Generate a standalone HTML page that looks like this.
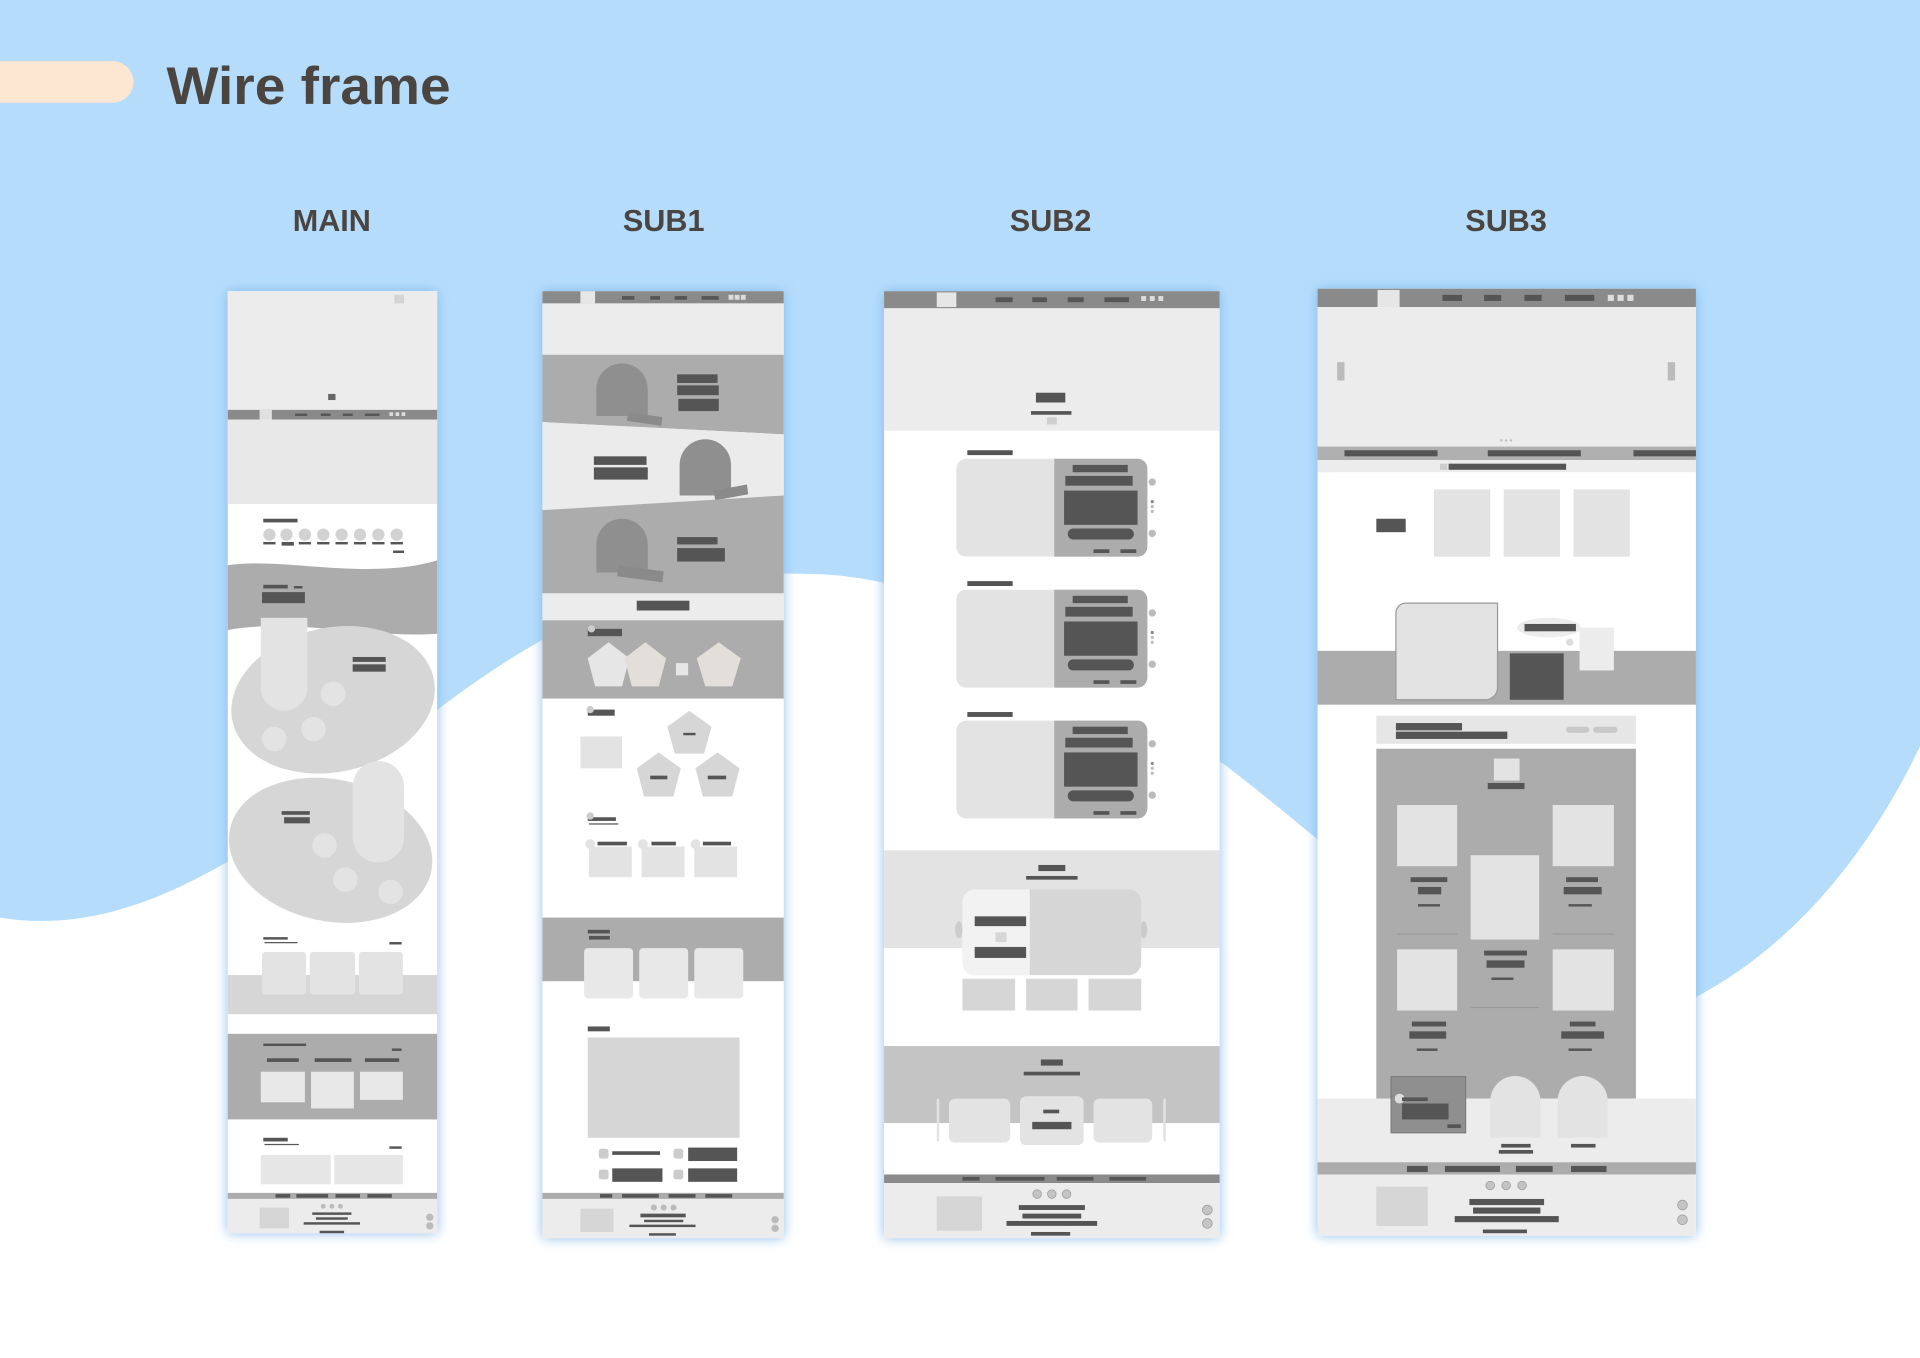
<!DOCTYPE html>
<html><head><meta charset="utf-8">
<style>
html,body{margin:0;padding:0;width:1920px;height:1358px;overflow:hidden;background:#fff}
svg{display:block}
</style></head>
<body>
<svg width="1920" height="1358" viewBox="0 0 1568 1110" xmlns="http://www.w3.org/2000/svg" preserveAspectRatio="none">
<defs>
<filter id="gl" x="-20%" y="-5%" width="140%" height="110%">
<feDropShadow dx="0" dy="0" stdDeviation="5" flood-color="#7fb6ea" flood-opacity="0.9"/>
</filter>
</defs>
<!-- background -->
<rect x="0" y="0" width="1568" height="1110" fill="#b5dcfb"/>
<path d="M0,750 C120,770 230,680 360,578 C470,495 560,462 680,470 C800,480 900,560 1000,625 C1150,740 1250,860 1385,815 C1470,770 1530,690 1568,610 L1568,1110 L0,1110 Z" fill="#ffffff"/>
<!-- title -->
<path d="M0,50 L92,50 A17,17 0 0 1 92,84 L0,84 Z" fill="#fde6d2"/>
<text x="136" y="85" font-family="Liberation Sans, sans-serif" font-weight="bold" font-size="43" fill="#4a4540" textLength="232" lengthAdjust="spacingAndGlyphs">Wire frame</text>
<g font-family="Liberation Sans, sans-serif" font-weight="bold" font-size="25" fill="#4a4540" text-anchor="middle">
<text x="271" y="189">MAIN</text>
<text x="542" y="189">SUB1</text>
<text x="858" y="189">SUB2</text>
<text x="1230" y="189">SUB3</text>
</g>

<!-- panels glow -->
<g filter="url(#gl)">
<rect x="186" y="238" width="171" height="770" fill="#fff"/>
<rect x="443" y="238" width="197" height="774" fill="#fff"/>
<rect x="722" y="238" width="274" height="774" fill="#fff"/>
<rect x="1076" y="236" width="309" height="774" fill="#fff"/>
</g>

<!-- ===== MAIN ===== -->
<g>
<rect x="186" y="238" width="171" height="97" fill="#ececec"/>
<rect x="322" y="241" width="8" height="7" fill="#d4d4d4"/>
<rect x="268" y="322" width="6" height="5" fill="#666"/>
<rect x="186" y="335" width="171" height="8" fill="#8a8a8a"/>
<rect x="212" y="335" width="10" height="8" fill="#e0e0e0"/>
<g fill="#555"><rect x="241" y="338" width="10" height="2"/><rect x="262" y="338" width="8" height="2"/><rect x="280" y="338" width="8" height="2"/><rect x="298" y="338" width="12" height="2"/></g>
<g fill="#ddd"><rect x="318" y="337" width="3" height="3"/><rect x="323" y="337" width="3" height="3"/><rect x="328" y="337" width="3" height="3"/></g>
<rect x="186" y="343" width="171" height="69" fill="#e8e8e8"/>
<rect x="215" y="424" width="28" height="3" fill="#555"/>
<g fill="#d2d2d2"><circle cx="220" cy="437" r="5"/><circle cx="234" cy="437" r="5"/><circle cx="249" cy="437" r="5"/><circle cx="264" cy="437" r="5"/><circle cx="279" cy="437" r="5"/><circle cx="294" cy="437" r="5"/><circle cx="309" cy="437" r="5"/><circle cx="324" cy="437" r="5"/></g>
<g fill="#555"><rect x="215" y="443" width="10" height="2"/><rect x="230" y="443" width="10" height="3"/><rect x="244" y="443" width="10" height="2"/><rect x="259" y="443" width="10" height="2"/><rect x="274" y="443" width="10" height="2"/><rect x="289" y="443" width="10" height="2"/><rect x="304" y="443" width="10" height="2"/><rect x="319" y="443" width="10" height="2"/><rect x="321" y="450" width="9" height="2"/></g>
<path d="M186,462 C230,455 300,475 357,458 L357,518 C300,522 240,505 186,515 Z" fill="#acacac"/>
<rect x="215" y="478" width="20" height="3" fill="#555"/><rect x="240" y="479" width="7" height="2" fill="#555"/>
<rect x="214" y="484" width="35" height="9" fill="#555"/>
<ellipse cx="272" cy="572" rx="84" ry="59" transform="rotate(-12 272 572)" fill="#d6d6d6"/>
<rect x="213" y="505" width="38" height="76" rx="19" fill="#e3e3e3"/>
<rect x="213" y="505" width="38" height="30" fill="#e3e3e3"/>
<circle cx="272" cy="567" r="10" fill="#e3e3e3"/><circle cx="256" cy="596" r="10" fill="#e3e3e3"/><circle cx="224" cy="604" r="10" fill="#e3e3e3"/>
<rect x="288" y="537" width="27" height="4" fill="#555"/><rect x="288" y="543" width="27" height="6" fill="#555"/>
<ellipse cx="270" cy="695" rx="84" ry="58" transform="rotate(12 270 695)" fill="#d6d6d6"/>
<rect x="288" y="622" width="42" height="83" rx="21" fill="#e3e3e3"/>
<circle cx="265" cy="691" r="10" fill="#e3e3e3"/><circle cx="282" cy="719" r="10" fill="#e3e3e3"/><circle cx="319" cy="729" r="10" fill="#e3e3e3"/>
<rect x="230" y="663" width="23" height="3" fill="#555"/><rect x="232" y="668" width="21" height="5" fill="#555"/>
<rect x="215" y="766" width="20" height="2" fill="#555"/><rect x="216" y="770" width="27" height="1" fill="#555"/><rect x="318" y="770" width="10" height="2" fill="#555"/>
<rect x="186" y="797" width="171" height="32" fill="#d6d6d6"/>
<g fill="#e3e3e3"><rect x="214" y="778" width="36" height="35" rx="3"/><rect x="253" y="778" width="37" height="35" rx="3"/><rect x="293" y="778" width="36" height="35" rx="3"/></g>
<rect x="186" y="845" width="171" height="70" fill="#acacac"/>
<rect x="215" y="853" width="35" height="2" fill="#555"/><rect x="320" y="857" width="8" height="2" fill="#555"/>
<g fill="#555"><rect x="218" y="865" width="26" height="3"/><rect x="257" y="865" width="30" height="3"/><rect x="298" y="865" width="28" height="3"/></g>
<g fill="#e8e8e8"><rect x="213" y="876" width="36" height="25"/><rect x="254" y="876" width="35" height="30"/><rect x="294" y="876" width="35" height="23"/></g>
<rect x="215" y="930" width="20" height="3" fill="#555"/><rect x="216" y="935" width="28" height="1" fill="#555"/><rect x="318" y="937" width="10" height="2" fill="#555"/>
<g fill="#e6e6e6"><rect x="213" y="944" width="57" height="24"/><rect x="273" y="944" width="56" height="24"/></g>
<rect x="186" y="975" width="171" height="5" fill="#acacac"/>
<g fill="#555"><rect x="225" y="976" width="12" height="3"/><rect x="242" y="976" width="26" height="3"/><rect x="274" y="976" width="20" height="3"/><rect x="300" y="976" width="20" height="3"/></g>
<rect x="186" y="980" width="171" height="28" fill="#ececec"/>
<rect x="212" y="987" width="24" height="17" fill="#d6d6d6"/>
<g fill="#bbb"><circle cx="264" cy="986" r="2"/><circle cx="271" cy="986" r="2"/><circle cx="278" cy="986" r="2"/><circle cx="351" cy="995" r="3"/><circle cx="351" cy="1002" r="3"/></g>
<g fill="#555"><rect x="255" y="991" width="32" height="2"/><rect x="258" y="995" width="26" height="2"/><rect x="248" y="999" width="46" height="2"/><rect x="261" y="1006" width="20" height="2"/></g>
</g>

<!-- ===== SUB1 ===== -->
<g>
<rect x="443" y="238" width="197" height="10" fill="#8a8a8a"/>
<rect x="474" y="238" width="12" height="10" fill="#e6e6e6"/>
<g fill="#555"><rect x="508" y="242" width="10" height="3"/><rect x="531" y="242" width="8" height="3"/><rect x="551" y="242" width="10" height="3"/><rect x="573" y="242" width="14" height="3"/></g>
<g fill="#ddd"><rect x="595" y="241" width="4" height="4"/><rect x="600" y="241" width="4" height="4"/><rect x="605" y="241" width="4" height="4"/></g>
<rect x="443" y="248" width="197" height="42" fill="#ececec"/>
<path d="M443,290 L640,290 L640,355 L443,345 Z" fill="#acacac"/>
<path d="M487,340 L487,318 A21,21 0 0 1 529,318 L529,340 Z" fill="#8f8f8f"/>
<path d="M513,337 L541,341 L540,348 L512,344 Z" fill="#8a8a8a"/>
<g fill="#555"><rect x="553" y="306" width="33" height="7"/><rect x="553" y="315" width="34" height="8"/><rect x="554" y="326" width="33" height="10"/></g>
<path d="M443,345 L640,355 L640,405 L443,417 Z" fill="#ebebeb"/>
<path d="M555,405 L555,380 A21,21 0 0 1 597,380 L597,405 Z" fill="#8f8f8f"/>
<path d="M583,401 L610,396 L611,404 L584,409 Z" fill="#8a8a8a"/>
<g fill="#555"><rect x="485" y="373" width="43" height="7"/><rect x="485" y="382" width="44" height="10"/></g>
<path d="M443,417 L640,405 L640,485 L443,485 Z" fill="#acacac"/>
<path d="M487,468 L487,445 A21,21 0 0 1 529,445 L529,468 Z" fill="#8f8f8f"/>
<path d="M505,462 L542,467 L541,476 L504,471 Z" fill="#8a8a8a"/>
<g fill="#555"><rect x="553" y="439" width="33" height="6"/><rect x="553" y="448" width="39" height="11"/></g>
<rect x="443" y="485" width="197" height="22" fill="#ececec"/>
<rect x="520" y="491" width="43" height="8" fill="#555"/>
<rect x="443" y="507" width="197" height="64" fill="#acacac"/>
<rect x="480" y="514" width="28" height="6" fill="#555"/><circle cx="483" cy="514" r="3" fill="#ccc"/>
<polygon points="497,525 514,538 508,561 486,561 480,538" fill="#e6e6e6"/>
<polygon points="527,525 544,538 538,561 516,561 510,538" fill="#e2dfdb"/>
<rect x="552" y="542" width="10" height="10" fill="#e6e6e6"/>
<polygon points="587,525 605,538 598,561 576,561 569,538" fill="#e2dfdb"/>
<rect x="480" y="580" width="22" height="5" fill="#555"/><circle cx="482" cy="580" r="3" fill="#ccc"/>
<polygon points="563,581 581,594 575,616 551,616 545,594" fill="#d6d6d6"/>
<rect x="558" y="599" width="10" height="2" fill="#555"/>
<rect x="474" y="602" width="34" height="26" fill="#e3e3e3"/>
<polygon points="538,615 556,628 550,651 526,651 520,628" fill="#d6d6d6"/>
<polygon points="586,615 604,628 598,651 574,651 568,628" fill="#d6d6d6"/>
<rect x="531" y="634" width="14" height="3" fill="#555"/><rect x="578" y="634" width="15" height="3" fill="#555"/>
<rect x="480" y="668" width="23" height="3" fill="#555"/><rect x="481" y="673" width="24" height="1" fill="#555"/><circle cx="482" cy="667" r="3" fill="#ccc"/>
<g fill="#e3e3e3"><rect x="481" y="692" width="35" height="25"/><rect x="524" y="692" width="35" height="25"/><rect x="567" y="692" width="35" height="25"/><circle cx="482" cy="690" r="4"/><circle cx="525" cy="690" r="4"/><circle cx="568" cy="690" r="4"/></g>
<g fill="#555"><rect x="488" y="688" width="24" height="3"/><rect x="532" y="688" width="20" height="3"/><rect x="574" y="688" width="23" height="3"/></g>
<rect x="443" y="750" width="197" height="52" fill="#acacac"/>
<rect x="480" y="760" width="18" height="3" fill="#555"/><rect x="481" y="765" width="17" height="3" fill="#555"/>
<g fill="#e8e8e8"><rect x="477" y="775" width="40" height="41" rx="3"/><rect x="522" y="775" width="40" height="41" rx="3"/><rect x="567" y="775" width="40" height="41" rx="3"/></g>
<rect x="480" y="839" width="18" height="4" fill="#555"/>
<rect x="480" y="848" width="124" height="82" fill="#d6d6d6"/>
<g fill="#ccc"><rect x="489" y="939" width="8" height="8" rx="2"/><rect x="550" y="939" width="8" height="8" rx="2"/><rect x="489" y="956" width="8" height="8" rx="2"/><rect x="550" y="956" width="8" height="8" rx="2"/></g>
<g fill="#555"><rect x="500" y="941" width="39" height="3"/><rect x="562" y="938" width="40" height="11"/><rect x="500" y="955" width="41" height="11"/><rect x="562" y="955" width="40" height="11"/></g>
<rect x="443" y="975" width="197" height="5" fill="#acacac"/>
<g fill="#555"><rect x="490" y="976" width="10" height="3"/><rect x="508" y="976" width="30" height="3"/><rect x="546" y="976" width="22" height="3"/><rect x="576" y="976" width="22" height="3"/></g>
<rect x="443" y="980" width="197" height="32" fill="#ececec"/>
<rect x="474" y="988" width="27" height="19" fill="#d6d6d6"/>
<g fill="#bbb"><circle cx="534" cy="987" r="2.5"/><circle cx="542" cy="987" r="2.5"/><circle cx="550" cy="987" r="2.5"/><circle cx="633" cy="997" r="3"/><circle cx="633" cy="1004" r="3"/></g>
<g fill="#555"><rect x="523" y="992" width="37" height="3"/><rect x="526" y="997" width="32" height="2"/><rect x="514" y="1001" width="54" height="2"/><rect x="530" y="1008" width="22" height="2"/></g>
</g>

<!-- ===== SUB2 ===== -->
<g>
<rect x="722" y="238" width="274" height="14" fill="#8a8a8a"/>
<rect x="765" y="239" width="16" height="12" fill="#e6e6e6"/>
<g fill="#555"><rect x="813" y="243" width="14" height="4"/><rect x="843" y="243" width="12" height="4"/><rect x="872" y="243" width="13" height="4"/><rect x="902" y="243" width="20" height="4"/></g>
<g fill="#ddd"><rect x="932" y="242" width="4" height="4"/><rect x="939" y="242" width="4" height="4"/><rect x="946" y="242" width="4" height="4"/></g>
<rect x="722" y="252" width="274" height="100" fill="#ececec"/>
<rect x="846" y="321" width="24" height="8" fill="#555"/>
<rect x="842" y="336" width="33" height="3" fill="#555"/>
<rect x="855" y="341" width="8" height="6" fill="#cfcfcf"/>
<g id="c1">
<rect x="790" y="368" width="37" height="4" fill="#555"/>
<rect x="781" y="375" width="156" height="80" rx="8" fill="#e3e3e3"/>
<path d="M861,375 L929,375 A8,8 0 0 1 937,383 L937,447 A8,8 0 0 1 929,455 L861,455 Z" fill="#acacac"/>
<rect x="876" y="380" width="45" height="6" fill="#555"/>
<rect x="870" y="389" width="55" height="8" fill="#555"/>
<rect x="869" y="401" width="60" height="28" fill="#555"/>
<rect x="872" y="432" width="54" height="9" rx="4.5" fill="#555"/>
<rect x="893" y="449" width="13" height="3" fill="#555"/><rect x="915" y="449" width="13" height="3" fill="#555"/>
<circle cx="941" cy="394" r="3" fill="#bbb"/><circle cx="941" cy="436" r="3" fill="#bbb"/>
<circle cx="941" cy="410" r="1.3" fill="#888"/><circle cx="941" cy="414" r="1.3" fill="#bbb"/><circle cx="941" cy="418" r="1.3" fill="#bbb"/>
</g>
<use href="#c1" transform="translate(0,107)"/>
<use href="#c1" transform="translate(0,214)"/>
<rect x="722" y="695" width="274" height="80" fill="#e3e3e3"/>
<rect x="848" y="707" width="22" height="5" fill="#555"/><rect x="838" y="716" width="42" height="3" fill="#555"/>
<ellipse cx="783" cy="760" rx="3" ry="7" fill="#ccc"/><ellipse cx="934" cy="760" rx="3" ry="7" fill="#ccc"/>
<rect x="786" y="727" width="146" height="70" rx="10" fill="#d6d6d6"/>
<path d="M796,727 L841,727 L841,797 L796,797 A10,10 0 0 1 786,787 L786,737 A10,10 0 0 1 796,727 Z" fill="#f2f2f2"/>
<rect x="796" y="749" width="42" height="8" fill="#555"/>
<rect x="813" y="762" width="9" height="8" fill="#d6d6d6"/>
<rect x="796" y="774" width="42" height="9" fill="#555"/>
<g fill="#d6d6d6"><rect x="786" y="800" width="43" height="26"/><rect x="838" y="800" width="42" height="26"/><rect x="889" y="800" width="43" height="26"/></g>
<rect x="722" y="855" width="274" height="63" fill="#c4c4c4"/>
<rect x="850" y="866" width="18" height="5" fill="#555"/><rect x="836" y="876" width="46" height="3" fill="#555"/>
<rect x="765" y="898" width="2" height="35" fill="#e3e3e3"/><rect x="950" y="898" width="2" height="35" fill="#e3e3e3"/>
<g fill="#e3e3e3"><rect x="775" y="898" width="50" height="36" rx="5"/><rect x="833" y="896" width="52" height="40" rx="5"/><rect x="893" y="898" width="48" height="36" rx="5"/></g>
<rect x="852" y="907" width="13" height="3" fill="#555"/><rect x="843" y="917" width="32" height="6" fill="#555"/>
<rect x="722" y="960" width="274" height="7" fill="#8a8a8a"/>
<g fill="#555"><rect x="786" y="962" width="14" height="3"/><rect x="813" y="962" width="40" height="3"/><rect x="863" y="962" width="30" height="3"/><rect x="906" y="962" width="30" height="3"/></g>
<rect x="722" y="967" width="274" height="45" fill="#ececec"/>
<rect x="765" y="978" width="37" height="28" fill="#d6d6d6"/>
<g fill="#c4c4c4" stroke="#999" stroke-width="0.6"><circle cx="847" cy="976" r="3.5"/><circle cx="859" cy="976" r="3.5"/><circle cx="871" cy="976" r="3.5"/><circle cx="986" cy="989" r="4"/><circle cx="986" cy="1000" r="4"/></g>
<g fill="#555"><rect x="832" y="985" width="54" height="4"/><rect x="835" y="992" width="48" height="4"/><rect x="822" y="998" width="74" height="4"/><rect x="842" y="1007" width="32" height="3"/></g>
</g>

<!-- ===== SUB3 ===== -->
<g>
<rect x="1076" y="236" width="309" height="15" fill="#8a8a8a"/>
<rect x="1125" y="237" width="18" height="14" fill="#e6e6e6"/>
<g fill="#555"><rect x="1178" y="241" width="16" height="5"/><rect x="1212" y="241" width="14" height="5"/><rect x="1245" y="241" width="14" height="5"/><rect x="1278" y="241" width="24" height="5"/></g>
<g fill="#ddd"><rect x="1313" y="241" width="5" height="5"/><rect x="1321" y="241" width="5" height="5"/><rect x="1329" y="241" width="5" height="5"/></g>
<rect x="1076" y="251" width="309" height="114" fill="#ececec"/>
<rect x="1092" y="296" width="6" height="15" fill="#bbb"/><rect x="1362" y="296" width="6" height="15" fill="#bbb"/>
<g fill="#bbb"><circle cx="1226" cy="360" r="1"/><circle cx="1230" cy="360" r="1"/><circle cx="1234" cy="360" r="1"/></g>
<rect x="1076" y="365" width="309" height="11" fill="#b0b0b0"/>
<g fill="#555"><rect x="1098" y="368" width="76" height="5"/><rect x="1215" y="368" width="76" height="5"/><rect x="1334" y="368" width="51" height="5"/></g>
<rect x="1076" y="376" width="309" height="10" fill="#ececec"/>
<rect x="1176" y="379" width="6" height="5" fill="#ccc"/><rect x="1183" y="379" width="96" height="5" fill="#555"/>
<rect x="1124" y="424" width="24" height="11" fill="#555"/>
<g fill="#e3e3e3"><rect x="1171" y="400" width="46" height="55"/><rect x="1228" y="400" width="46" height="55"/><rect x="1285" y="400" width="46" height="55"/></g>
<rect x="1076" y="532" width="309" height="44" fill="#acacac"/>
<path d="M1148,493 L1223,493 L1223,562 A10,10 0 0 1 1213,572 L1140,572 L1140,501 A8,8 0 0 1 1148,493 Z" fill="#e3e3e3" stroke="#999" stroke-width="1"/>
<ellipse cx="1265" cy="513" rx="26" ry="8" fill="#ececec"/>
<rect x="1245" y="510" width="42" height="6" fill="#555"/>
<circle cx="1282" cy="525" r="3" fill="#ddd"/>
<rect x="1233" y="534" width="44" height="38" fill="#555"/>
<rect x="1290" y="513" width="28" height="35" fill="#ececec"/>
<rect x="1124" y="585" width="212" height="23" fill="#e6e6e6"/>
<rect x="1140" y="591" width="54" height="6" fill="#555"/><rect x="1140" y="598" width="91" height="6" fill="#555"/>
<rect x="1279" y="594" width="19" height="5" rx="2.5" fill="#c8c8c8"/><rect x="1301" y="594" width="20" height="5" rx="2.5" fill="#c8c8c8"/>
<rect x="1124" y="612" width="212" height="286" fill="#acacac"/>
<rect x="1220" y="620" width="21" height="18" fill="#e3e3e3"/><rect x="1215" y="640" width="30" height="5" fill="#555"/>
<g fill="#e3e3e3"><rect x="1141" y="658" width="49" height="50"/><rect x="1268" y="658" width="50" height="50"/><rect x="1201" y="699" width="56" height="69"/><rect x="1141" y="776" width="49" height="50"/><rect x="1268" y="776" width="50" height="50"/></g>
<g fill="#999"><rect x="1141" y="763" width="49" height="1"/><rect x="1268" y="763" width="50" height="1"/><rect x="1201" y="823" width="56" height="1"/></g>
<g fill="#555">
<rect x="1152" y="717" width="30" height="4"/><rect x="1158" y="725" width="19" height="6"/><rect x="1158" y="739" width="18" height="2"/>
<rect x="1279" y="717" width="26" height="4"/><rect x="1277" y="725" width="31" height="6"/><rect x="1281" y="739" width="19" height="2"/>
<rect x="1212" y="777" width="35" height="4"/><rect x="1214" y="785" width="31" height="6"/><rect x="1218" y="799" width="18" height="2"/>
<rect x="1153" y="835" width="28" height="4"/><rect x="1151" y="843" width="30" height="6"/><rect x="1157" y="857" width="17" height="2"/>
<rect x="1282" y="835" width="21" height="4"/><rect x="1275" y="843" width="35" height="6"/><rect x="1281" y="857" width="19" height="2"/>
</g>
<rect x="1076" y="898" width="309" height="52" fill="#ececec"/>
<rect x="1136" y="880" width="61" height="46" fill="#8f8f8f" stroke="#777" stroke-width="0.8"/>
<circle cx="1143" cy="898" r="4" fill="#ddd"/>
<rect x="1145" y="897" width="21" height="3" fill="#555"/><rect x="1145" y="902" width="38" height="13" fill="#555"/><rect x="1182" y="919" width="11" height="3" fill="#555"/>
<path d="M1217,930 L1217,900 A20.5,20.5 0 0 1 1258,900 L1258,930 Z" fill="#e3e3e3"/>
<path d="M1272,930 L1272,900 A20.5,20.5 0 0 1 1313,900 L1313,930 Z" fill="#e3e3e3"/>
<g fill="#555"><rect x="1226" y="935" width="24" height="3"/><rect x="1224" y="940" width="28" height="3"/><rect x="1283" y="935" width="20" height="3"/></g>
<rect x="1076" y="950" width="309" height="10" fill="#acacac"/>
<g fill="#555"><rect x="1149" y="953" width="17" height="5"/><rect x="1180" y="953" width="45" height="5"/><rect x="1238" y="953" width="30" height="5"/><rect x="1283" y="953" width="29" height="5"/></g>
<rect x="1076" y="960" width="309" height="50" fill="#ececec"/>
<rect x="1124" y="970" width="42" height="32" fill="#d6d6d6"/>
<g fill="#c4c4c4" stroke="#999" stroke-width="0.6"><circle cx="1217" cy="969" r="3.5"/><circle cx="1230" cy="969" r="3.5"/><circle cx="1243" cy="969" r="3.5"/><circle cx="1374" cy="985" r="4"/><circle cx="1374" cy="997" r="4"/></g>
<g fill="#555"><rect x="1200" y="980" width="61" height="5"/><rect x="1203" y="987" width="55" height="5"/><rect x="1188" y="994" width="85" height="5"/><rect x="1211" y="1005" width="36" height="3"/></g>
</g>
</svg>
</body></html>
